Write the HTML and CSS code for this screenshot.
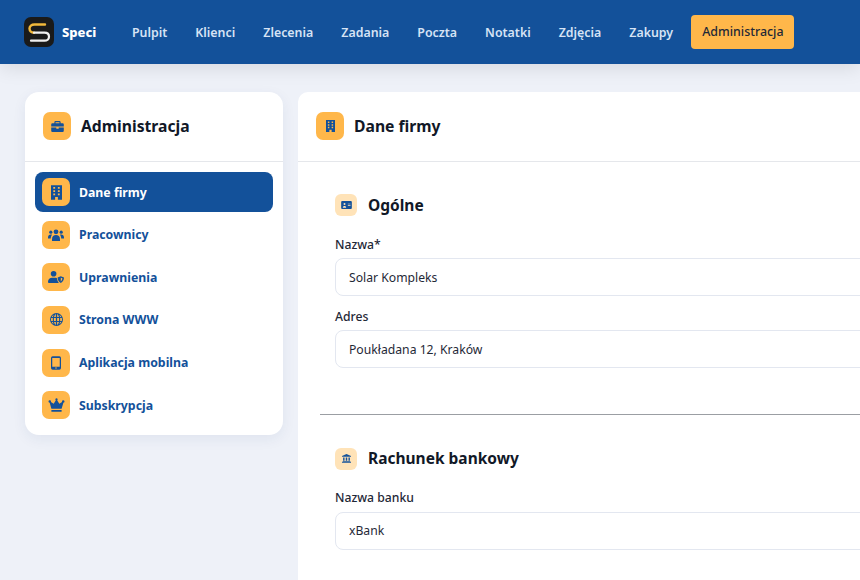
FILE: index.html
```html
<!DOCTYPE html>
<html lang="pl">
<head>
    <meta charset="UTF-8">
    <title>Speci - Administracja</title>
    <link rel="stylesheet" href="styles.css">
</head>
<body>
    <!-- Top navigation -->
    <header class="topbar">
        <a class="brand" href="#">
            <span class="brand-logo">
                <svg viewBox="0 0 30 30" width="30" height="30">
                    <path d="M21 7.500H10.500C7.500 7.500 5.500 9.300 5.500 11.600C5.500 14 7.500 15.700 10 15.700" fill="none" stroke="#f2b93b" stroke-width="2.400" stroke-linecap="round"/>
                    <path d="M10 15.700H20.500C23.300 15.700 25 17.500 25 19.700C25 22 23 23.700 20.500 23.700H7" fill="none" stroke="#f1f1f1" stroke-width="2.200" stroke-linecap="round"/>
                </svg>
            </span>
            <span class="brand-name">Speci</span>
        </a>
        <nav class="topnav">
            <a href="#">Pulpit</a>
            <a href="#">Klienci</a>
            <a href="#">Zlecenia</a>
            <a href="#">Zadania</a>
            <a href="#">Poczta</a>
            <a href="#">Notatki</a>
            <a href="#">Zdjęcia</a>
            <a href="#">Zakupy</a>
            <a href="#" class="active">Administracja</a>
        </nav>
    </header>

    <div class="layout">
        <!-- Sidebar -->
        <aside class="sidebar">
            <div class="card-head">
                <span class="icon-box">
                    <svg viewBox="0 0 16 14" width="13" height="11"><path fill-rule="evenodd" d="M5.500 0h5A1.500 1.500 0 0 1 12 1.500V3h2.500A1.500 1.500 0 0 1 16 4.500V7H0V4.500A1.500 1.500 0 0 1 1.500 3H4V1.500A1.500 1.500 0 0 1 5.500 0zM5.500 1.500V3h5V1.500zM0 8.200h6.500V10h3V8.200H16v4.300a1.500 1.500 0 0 1-1.500 1.500h-13A1.500 1.500 0 0 1 0 12.500z"/></svg>
                </span>
                <h2>Administracja</h2>
            </div>
            <ul class="side-menu">
                <li class="active">
                    <span class="icon-box">
                        <svg viewBox="0 0 12 16" width="11" height="15"><path fill-rule="evenodd" d="M0 0h12v16H7.500v-3h-3v3H0zM2.500 2v2h2V2zm5 0v2h2V2zM2.500 5.500v2h2v-2zm5 0v2h2v-2zM2.500 9v2h2V9zm5 0v2h2V9z"/></svg>
                    </span>
                    Dane firmy
                </li>
                <li>
                    <span class="icon-box">
                        <svg viewBox="0 0 20 15" width="16" height="12"><circle cx="10" cy="3.500" r="3"/><circle cx="3.500" cy="4" r="2"/><circle cx="16.500" cy="4" r="2"/><path d="M5 13c0-4 2-5.500 5-5.500s5 1.500 5 5.500v2H5zM0 10.500C0 8 1.500 6.800 3.500 6.800c.7 0 1.200.2 1.600.4C4 8.500 3.500 10 3.500 12H0zM20 10.500c0-2.500-1.500-3.700-3.500-3.700-.7 0-1.200.2-1.600.4 1.100 1.300 1.600 2.800 1.600 4.800H20z"/></svg>
                    </span>
                    Pracownicy
                </li>
                <li>
                    <span class="icon-box">
                        <svg viewBox="0 0 20 15" width="16" height="12"><circle cx="7" cy="3.500" r="3.500"/><path d="M0 13.500C0 10.500 2.500 8.500 5 8.500h4c.8 0 1.500.2 2.200.5.200 2 .8 4 2.300 5.500-.1.300-.4.500-.8.500H1c-.6 0-1-.5-1-1.500z"/><path fill-rule="evenodd" d="M16 6.500l4 1.500c0 3.200-1.500 5.500-4 7-2.500-1.500-4-3.800-4-7zm0 2v4.500c1.200-.9 1.900-2.300 2-3.800z"/></svg>
                    </span>
                    Uprawnienia
                </li>
                <li>
                    <span class="icon-box">
                        <svg viewBox="0 0 16 16" width="13" height="13"><path fill-rule="evenodd" d="M8 0a8 8 0 1 1 0 16A8 8 0 0 1 8 0zM7.200 1.300C6.200 2 5.400 3.300 5 5h2.200zm1.600 0V5H11c-.4-1.700-1.200-3-2.200-3.700zM3.600 5c.2-1 .5-2 1-2.800A6.800 6.800 0 0 0 2.100 5zm8.800 0h1.500a6.800 6.800 0 0 0-2.500-2.800c.5.800.8 1.800 1 2.800zM1.500 6.300a7 7 0 0 0 0 3.400h2a18 18 0 0 1 0-3.400zm3.400 0a16 16 0 0 0 0 3.400h2.300V6.300zm3.900 0v3.400h2.300a16 16 0 0 0 0-3.400zm3.700 0a18 18 0 0 1 0 3.400h2a7 7 0 0 0 0-3.400zM2.100 11c.6 1.200 1.400 2.200 2.500 2.800-.5-.8-.8-1.800-1-2.800zM5 11c.4 1.700 1.200 3 2.200 3.700V11zm3.800 0v3.700c1-.7 1.800-2 2.200-3.700zm2.600 2.800c1.100-.6 1.900-1.600 2.500-2.800h-1.500c-.2 1-.5 2-1 2.800z"/></svg>
                    </span>
                    Strona WWW
                </li>
                <li>
                    <span class="icon-box">
                        <svg viewBox="0 0 12 16" width="10" height="14"><path fill-rule="evenodd" d="M2 0h8a2 2 0 0 1 2 2v12a2 2 0 0 1-2 2H2a2 2 0 0 1-2-2V2a2 2 0 0 1 2-2zm-.5 2v10.500h9V2zM6 13.200a.9.9 0 1 0 0 1.800.9.9 0 0 0 0-1.800z"/></svg>
                    </span>
                    Aplikacja mobilna
                </li>
                <li>
                    <span class="icon-box">
                        <svg viewBox="0 0 20 16" width="17" height="14"><path d="M10 0a1.400 1.400 0 0 1 .8 2.500l2.500 4.100 3.300-2a1.500 1.500 0 1 1 1.500.8L16 12.500H4L2 5.400a1.500 1.500 0 1 1 1.400-.8l3.300 2 2.500-4.100A1.400 1.400 0 0 1 10 0zM4 14h12v2H4z"/></svg>
                    </span>
                    Subskrypcja
                </li>
            </ul>
        </aside>

        <!-- Company details -->
        <main class="content">
            <div class="card-head">
                <span class="icon-box">
                    <svg viewBox="0 0 12 16" width="9" height="12"><path fill-rule="evenodd" d="M0 0h12v16H7.500v-3h-3v3H0zM2.500 2v2h2V2zm5 0v2h2V2zM2.500 5.500v2h2v-2zm5 0v2h2v-2zM2.500 9v2h2V9zm5 0v2h2V9z"/></svg>
                </span>
                <h2>Dane firmy</h2>
            </div>

            <section class="form-section">
                <div class="section-title">
                    <span class="icon-small">
                        <svg viewBox="0 0 16 12" width="11" height="8"><path fill-rule="evenodd" d="M1.500 0h13A1.500 1.500 0 0 1 16 1.500v9a1.500 1.500 0 0 1-1.500 1.500h-13A1.500 1.500 0 0 1 0 10.500v-9A1.500 1.500 0 0 1 1.500 0zM5 3a1.500 1.500 0 1 0 0 3 1.500 1.500 0 0 0 0-3zM2.500 10h5c0-1.500-1-2.500-2.500-2.500S2.500 8.500 2.500 10zM10 4v1h4V4zm0 2.500v1h4v-1z"/></svg>
                    </span>
                    <h3>Ogólne</h3>
                </div>
                <label class="field">
                    <span>Nazwa*</span>
                    <input type="text" value="Solar Kompleks">
                </label>
                <label class="field">
                    <span>Adres</span>
                    <input type="text" value="Poukładana 12, Kraków">
                </label>
            </section>

            <hr class="section-line">

            <section class="form-section">
                <div class="section-title">
                    <span class="icon-small">
                        <svg viewBox="0 0 16 16" width="9" height="9"><path d="M8 0l8 3.500V5H0V3.500zM2 6h2.500v6H2zM6.700 6h2.600v6H6.700zM11.500 6H14v6h-2.500zM1 13h14v1H1zM0 14.500h16V16H0z"/></svg>
                    </span>
                    <h3>Rachunek bankowy</h3>
                </div>
                <label class="field">
                    <span>Nazwa banku</span>
                    <input type="text" value="xBank">
                </label>
            </section>
        </main>
    </div>
</body>
</html>
```

FILE: styles.css
```css
* {
    box-sizing: border-box;
    margin: 0;
    padding: 0;
    font-family: 'Noto Sans', sans-serif;
}

html, body {
    height: 580px;
    overflow: hidden;
}

body {
    background: #eef1f8;
    color: #111827;
}

/* Top bar */
.topbar {
    height: 64px;
    background: #13519a;
    display: flex;
    align-items: center;
    padding-left: 24px;
    box-shadow: 0 4px 18px rgba(0,0,0,0.1);
}

.brand {
    display: flex;
    align-items: center;
    gap: 8px;
    width: 96px;
    text-decoration: none;
}

.brand-logo {
    width: 30px;
    height: 30px;
    background: #1a1a1a;
    border-radius: 7px;
    display: block;
}

.brand-logo svg {
    display: block;
}

.brand-name {
    color: #fff;
    font-size: 13px;
    font-weight: 800;
}

.topnav {
    display: flex;
    align-items: center;
    gap: 4px;
}

.topnav a {
    color: #d6e3f5;
    font-size: 12.400px;
    font-weight: 600;
    text-decoration: none;
    padding: 8px 12px;
}

.topnav a.active {
    background: #ffb74a;
    color: #1f2937;
    border-radius: 4px;
    font-weight: 500;
    height: 34px;
    margin-left: 2px;
    padding: 8px 10px 8px 11px;
}

/* Page layout */
.layout {
    display: flex;
    align-items: flex-start;
    gap: 15px;
    padding: 28px 0 0 25px;
}

.sidebar {
    width: 258px;
    flex-shrink: 0;
    background: #fff;
    border-radius: 14px;
    box-shadow: 0 4px 14px rgba(30,60,110,0.07);
}

.content {
    width: 600px;
    flex-shrink: 0;
    height: 500px;
    background: #fff;
    border-radius: 10px 0 0 0;
}

.card-head {
    height: 70px;
    display: flex;
    align-items: flex-start;
    gap: 10px;
    padding: 20px 18px 0;
    border-bottom: 1px solid #e5e7eb;
}

.card-head h2 {
    font-size: 15.700px;
    font-weight: 700;
    line-height: 28px;
    color: #111827;
}

.icon-box {
    width: 28px;
    height: 28px;
    flex-shrink: 0;
    background: #ffb74a;
    border-radius: 7px;
    display: flex;
    align-items: center;
    justify-content: center;
}

.icon-box svg, .icon-small svg {
    fill: #13519a;
}

/* Sidebar menu */
.side-menu {
    list-style: none;
    padding: 10px;
}

.side-menu li {
    height: 40px;
    margin-bottom: 2.650px;
    padding: 0 7px;
    display: flex;
    align-items: center;
    gap: 9px;
    border-radius: 8px;
    color: #13519a;
    font-size: 12.300px;
    font-weight: 700;
}

.side-menu li:last-child {
    margin-bottom: 0;
}

.side-menu li.active {
    background: #13519a;
    color: #fff;
}

/* Form */
.form-section {
    padding: 32px 0 0 37px;
}

.section-title {
    display: flex;
    align-items: center;
    gap: 11px;
    margin-bottom: 19.500px;
}

.section-title h3 {
    font-size: 15.500px;
    font-weight: 700;
    line-height: 20px;
    padding-bottom: 1px;
    color: #111827;
}

.icon-small {
    width: 22px;
    height: 22px;
    background: #ffe3b8;
    border-radius: 6px;
    display: flex;
    align-items: center;
    justify-content: center;
}

.field {
    display: block;
    margin-bottom: 11.600px;
}

.field span {
    display: block;
    font-size: 12.200px;
    font-weight: 500;
    line-height: 17px;
    margin-bottom: 5.500px;
    color: #1f2937;
}

.field input {
    display: block;
    width: 100%;
    height: 38px;
    padding: 0 13px;
    border: 1px solid #e3e7f0;
    border-radius: 8px;
    font-size: 12.200px;
    color: #1f2937;
    background: #fff;
}

.section-line {
    border: none;
    border-top: 1px solid #9b9ea3;
    margin: 45.900px 0 1px 22px;
}
```
